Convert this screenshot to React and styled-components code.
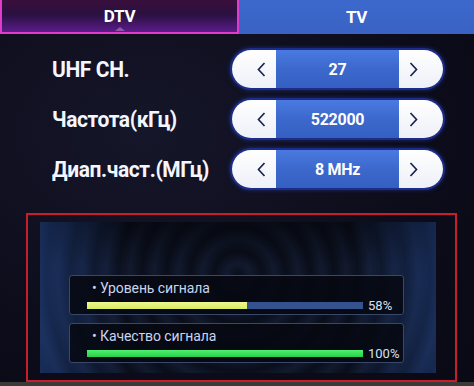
import React from 'react';
import styled, { createGlobalStyle } from 'styled-components';

const Global = createGlobalStyle`
  html, body { margin: 0; padding: 0; background: #0c0c1a; }
  #root { width: 474px; height: 386px; overflow: hidden; }
`;

const Screen = styled.div`
  width: 474px;
  height: 386px;
  display: flex;
  flex-direction: column;
  background: radial-gradient(ellipse at 30% 35%, #16162a 0%, #0c0c1a 60%, #0a0a16 100%);
  font-family: Roboto, 'Liberation Sans', sans-serif;
  color: #ffffff;
`;

const Tabs = styled.div`
  display: flex;
  height: 34px;
`;

const Tab = styled.div`
  flex: 1;
  position: relative;
  display: flex;
  align-items: center;
  justify-content: center;
  font-size: 17px;
  font-weight: 700;
  letter-spacing: -0.3px;
  box-sizing: border-box;
  background: ${({ active }) =>
    active
      ? 'linear-gradient(180deg, #3a0f3c 0%, #2a1040 45%, #5a1c8a 100%)'
      : 'linear-gradient(180deg, #3c68cc 0%, #3a62c4 100%)'};
  border: ${({ active }) => (active ? '2px solid #e03cc8' : 'none')};
  border-top: none;

  ${({ active }) =>
    active &&
    `&::after {
      content: '';
      position: absolute;
      left: 50%;
      bottom: 1px;
      margin-left: -5px;
      border-left: 5px solid transparent;
      border-right: 5px solid transparent;
      border-bottom: 4px solid #8a5aa8;
    }`}
`;

const Form = styled.div`
  display: flex;
  flex-direction: column;
  gap: 12px;
  padding: 16px 31px 0 52px;
`;

const Row = styled.div`
  display: flex;
  align-items: center;
  justify-content: space-between;
  height: 38px;
`;

const Label = styled.div`
  font-size: 21px;
  font-weight: 700;
  letter-spacing: -0.4px;
  color: #f4f6ff;
  transform: scaleY(1.08);
`;

const Spinner = styled.div`
  width: 211px;
  height: 38px;
  display: flex;
  border-radius: 19px;
  overflow: hidden;
  box-sizing: border-box;
  box-shadow: 0 0 0 2px #1c2c8a, 0 0 4px 2px rgba(40, 70, 200, 0.5);
`;

const Arrow = styled.div`
  width: 34px;
  display: flex;
  align-items: center;
  justify-content: ${({ side }) => (side === 'left' ? 'flex-end' : 'flex-start')};
  padding: ${({ side }) => (side === 'left' ? '0 10px 0 0' : '0 0 0 10px')};
  background: linear-gradient(180deg, #ffffff 0%, #eef0f8 100%);
`;

const Value = styled.div`
  flex: 1;
  display: flex;
  align-items: center;
  justify-content: center;
  font-size: 16px;
  font-weight: 700;
  letter-spacing: -0.3px;
  background: linear-gradient(180deg, #4a7ae0 0%, #3c68cc 50%, #3560c2 100%);
`;

const Frame = styled.div`
  margin: 25px 17px 0 26px;
  height: 169px;
  box-sizing: border-box;
  border: 2px solid #c81e2c;
  padding: 7px 19px 7px 12px;
  display: flex;
`;

const Panel = styled.div`
  flex: 1;
  display: flex;
  flex-direction: column;
  justify-content: flex-end;
  gap: 8px;
  padding: 0 32px 10px 29px;
  background:
    linear-gradient(90deg, rgba(40, 80, 160, 0.45) 0%, rgba(0, 0, 0, 0) 22%, rgba(0, 0, 0, 0) 78%, rgba(40, 80, 160, 0.4) 100%),
    linear-gradient(180deg, rgba(4, 6, 12, 0.7) 0%, rgba(0, 0, 0, 0) 30%),
    repeating-radial-gradient(circle at 50% 35%, #0a0e1a 0px, #121a2e 12px, #0a0e1a 24px),
    #0c1020;
`;

const Gauge = styled.div`
  height: 40px;
  box-sizing: border-box;
  border: 1px solid #3a4868;
  border-radius: 3px;
  background: rgba(6, 8, 16, 0.85);
  padding: 4px 0 0 17px;
`;

const GaugeLabel = styled.div`
  font-size: 14px;
  line-height: 17px;
  color: #c8d4f0;
  padding-left: 5px;
  letter-spacing: -0.1px;
`;

const GaugeRow = styled.div`
  display: flex;
  align-items: center;
  gap: 5px;
  margin-top: 1px;
`;

const Track = styled.div`
  width: 276px;
  height: 7px;
  background: #34528e;
  display: flex;
`;

const Fill = styled.div`
  height: 100%;
  background: ${({ color }) => color};
`;

const Percent = styled.div`
  font-size: 13px;
  color: #d8e0f4;
`;

const Bottom = styled.div`
  margin-top: auto;
  height: 4px;
  background: #3a3a3a;
`;

const Chevron = ({ dir }) => (
  <svg width="9" height="15" viewBox="0 0 9 15">
    <path
      d={dir === 'left' ? 'M7.5 1 L1.5 7.5 L7.5 14' : 'M1.5 1 L7.5 7.5 L1.5 14'}
      fill="none"
      stroke="#1a2450"
      strokeWidth="1.7"
    />
  </svg>
);

const rows = [
  { label: 'UHF CH.', value: '27' },
  { label: 'Частота(кГц)', value: '522000' },
  { label: 'Диап.част.(МГц)', value: '8 MHz' },
];

const gauges = [
  { label: 'Уровень сигнала', pct: 58, color: 'linear-gradient(180deg, #f0f890, #d8ec60)' },
  { label: 'Качество сигнала', pct: 100, color: 'linear-gradient(180deg, #50f070, #28d048)' },
];

export default function App() {
  return (
    <Screen>
      <Global />
      <Tabs>
        <Tab active>DTV</Tab>
        <Tab>TV</Tab>
      </Tabs>
      <Form>
        {rows.map((r) => (
          <Row key={r.label}>
            <Label>{r.label}</Label>
            <Spinner>
              <Arrow side="left"><Chevron dir="left" /></Arrow>
              <Value>{r.value}</Value>
              <Arrow side="right"><Chevron dir="right" /></Arrow>
            </Spinner>
          </Row>
        ))}
      </Form>
      <Frame>
        <Panel>
          {gauges.map((g) => (
            <Gauge key={g.label}>
              <GaugeLabel>• {g.label}</GaugeLabel>
              <GaugeRow>
                <Track>
                  <Fill color={g.color} style={{ width: `${g.pct}%` }} />
                </Track>
                <Percent>{g.pct}%</Percent>
              </GaugeRow>
            </Gauge>
          ))}
        </Panel>
      </Frame>
      <Bottom />
    </Screen>
  );
}
